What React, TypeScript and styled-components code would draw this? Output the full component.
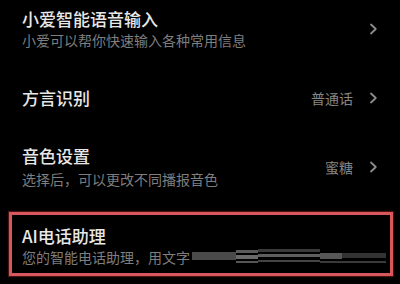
import React from 'react';
import styled, { createGlobalStyle } from 'styled-components';

const GlobalStyle = createGlobalStyle`
  html, body {
    margin: 0;
    padding: 0;
    background: #000;
  }
  body {
    font-family: "Noto Sans CJK SC", "Noto Sans", sans-serif;
    width: 400px;
    height: 284px;
    overflow: hidden;
  }
`;

const List = styled.div`
  display: flex;
  flex-direction: column;
  width: 400px;
`;

const Row = styled.div<{ $pt: number; $pb: number }>`
  display: flex;
  align-items: center;
  padding: ${(p) => p.$pt}px 22px ${(p) => p.$pb}px 22px;
`;

const Highlight = styled.div`
  margin: 3px 7px 0 9px;
  border: 3px solid #d8575c;
  box-shadow: 0 0 1px 1px rgba(120, 30, 35, 0.6);
  display: flex;
  align-items: center;
  padding: 10px 0 6px 10px;
`;

const Texts = styled.div`
  flex: 1;
  min-width: 0;
  display: flex;
  flex-direction: column;
`;

const Title = styled.div`
  font-size: 17px;
  font-weight: 500;
  line-height: 22px;
  color: #e8e8e8;
  white-space: nowrap;
`;

const Sub = styled.div<{ $mt?: number }>`
  font-size: 14px;
  line-height: 20px;
  color: #7e7e7e;
  margin-top: ${(p) => p.$mt ?? 0}px;
  white-space: nowrap;
  display: flex;
  align-items: center;
`;

const Value = styled.span`
  font-size: 14px;
  color: #858585;
  margin-right: 16px;
`;

const Chevron = () => (
  <svg width="9" height="12" viewBox="0 0 9 12">
    <path d="M2 1.5 L6.8 6 L2 10.5" fill="none" stroke="#8c8c8c" strokeWidth="1.8" strokeLinecap="round" strokeLinejoin="round" />
  </svg>
);

const Smudge = () => (
  <svg width="196" height="16" viewBox="0 0 196 16" style={{ flexShrink: 0, marginLeft: 2 }}>
    <rect x="0" y="3" width="44" height="8" fill="#4a4a4a" />
    <rect x="44" y="1" width="22" height="3" fill="#5a5a5a" />
    <rect x="44" y="6" width="22" height="4" fill="#6a6a6a" />
    <rect x="44" y="12" width="22" height="2" fill="#555" />
    <rect x="66" y="0" width="62" height="3" fill="#3a3a3a" />
    <rect x="66" y="5" width="62" height="3" fill="#5e5e5e" />
    <rect x="66" y="11" width="62" height="2" fill="#444" />
    <rect x="128" y="4" width="22" height="6" fill="#575757" />
    <rect x="150" y="4" width="44" height="5" fill="#333" />
    <rect x="128" y="12" width="66" height="2" fill="#3a3a3a" />
  </svg>
);

export default function App() {
  return (
    <>
      <GlobalStyle />
      <List>
        <Row $pt={8} $pb={12}>
          <Texts>
            <Title>小爱智能语音输入</Title>
            <Sub>小爱可以帮你快速输入各种常用信息</Sub>
          </Texts>
          <Chevron />
        </Row>
        <Row $pt={25} $pb={19}>
          <Texts>
            <Title>方言识别</Title>
          </Texts>
          <Value>普通话</Value>
          <Chevron />
        </Row>
        <Row $pt={17} $pb={20}>
          <Texts>
            <Title>音色设置</Title>
            <Sub $mt={2}>选择后，可以更改不同播报音色</Sub>
          </Texts>
          <Value>蜜糖</Value>
          <Chevron />
        </Row>
        <Highlight>
          <Texts>
            <Title>AI电话助理</Title>
            <Sub>
              您的智能电话助理，用文字
              <Smudge />
            </Sub>
          </Texts>
        </Highlight>
      </List>
    </>
  );
}
